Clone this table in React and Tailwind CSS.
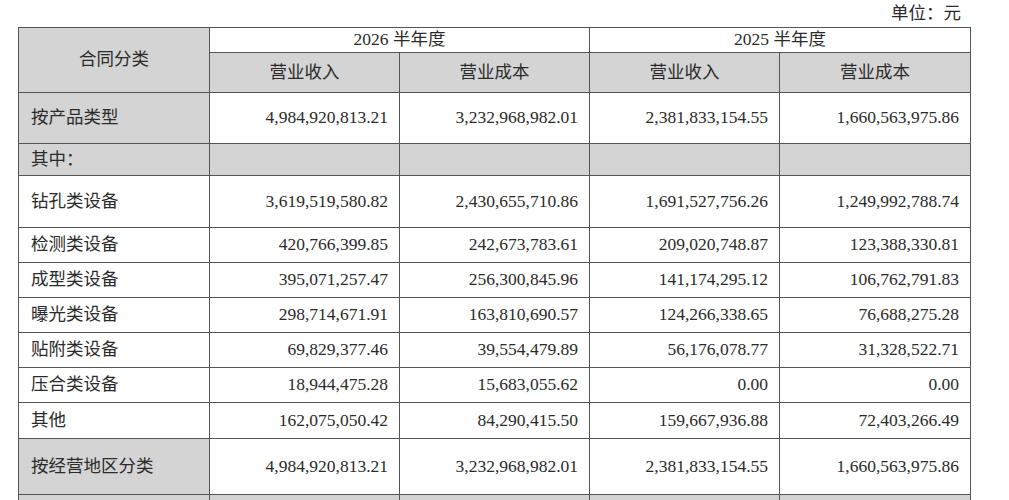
import React from "react";

const rows = [
  { label: "按产品类型", vals: ["4,984,920,813.21", "3,232,968,982.01", "2,381,833,154.55", "1,660,563,975.86"], h: "h-[51px]", grayLabel: true },
  { label: "其中：", vals: ["", "", "", ""], h: "h-[32px]", grayAll: true },
  { label: "钻孔类设备", vals: ["3,619,519,580.82", "2,430,655,710.86", "1,691,527,756.26", "1,249,992,788.74"], h: "h-[52px]" },
  { label: "检测类设备", vals: ["420,766,399.85", "242,673,783.61", "209,020,748.87", "123,388,330.81"], h: "h-[35px]" },
  { label: "成型类设备", vals: ["395,071,257.47", "256,300,845.96", "141,174,295.12", "106,762,791.83"], h: "h-[35px]" },
  { label: "曝光类设备", vals: ["298,714,671.91", "163,810,690.57", "124,266,338.65", "76,688,275.28"], h: "h-[35px]" },
  { label: "贴附类设备", vals: ["69,829,377.46", "39,554,479.89", "56,176,078.77", "31,328,522.71"], h: "h-[35px]" },
  { label: "压合类设备", vals: ["18,944,475.28", "15,683,055.62", "0.00", "0.00"], h: "h-[35px]" },
  { label: "其他", vals: ["162,075,050.42", "84,290,415.50", "159,667,936.88", "72,403,266.49"], h: "h-[36px]" },
  { label: "按经营地区分类", vals: ["4,984,920,813.21", "3,232,968,982.01", "2,381,833,154.55", "1,660,563,975.86"], h: "h-[56px]", grayLabel: true },
  { label: "", vals: ["", "", "", ""], h: "h-[30px]", grayAll: true },
];

const cell = "border border-[#555] px-[12px]";

export default function App() {
  return (
    <div className="w-[1009px] h-[500px] overflow-hidden bg-white text-[#2b2b2b] text-[17.5px] leading-none" style={{ fontFamily: '"Liberation Serif", "Noto Sans CJK SC", serif' }}>
      <div className="h-[27px] flex items-center justify-end pr-[48px] pt-[1px]">单位：元</div>
      <table className="ml-[18px] border-collapse table-fixed w-[952px]">
        <colgroup>
          <col className="w-[191px]" />
          <col className="w-[190px]" />
          <col className="w-[190px]" />
          <col className="w-[190px]" />
          <col className="w-[191px]" />
        </colgroup>
        <thead>
          <tr className="h-[25px]">
            <th rowSpan={2} className={`${cell} bg-[#d4d4d4] font-normal text-center`}>合同分类</th>
            <th colSpan={2} className={`${cell} font-normal text-center`}>2026 半年度</th>
            <th colSpan={2} className={`${cell} font-normal text-center`}>2025 半年度</th>
          </tr>
          <tr className="h-[40px]">
            <th className={`${cell} bg-[#d4d4d4] font-normal text-center`}>营业收入</th>
            <th className={`${cell} bg-[#d4d4d4] font-normal text-center`}>营业成本</th>
            <th className={`${cell} bg-[#d4d4d4] font-normal text-center`}>营业收入</th>
            <th className={`${cell} bg-[#d4d4d4] font-normal text-center`}>营业成本</th>
          </tr>
        </thead>
        <tbody>
          {rows.map((r, i) => (
            <tr key={i} className={r.h}>
              <td className={`${cell} text-left ${r.grayLabel || r.grayAll ? "bg-[#d4d4d4]" : ""}`}>{r.label}</td>
              {r.vals.map((v, j) => (
                <td key={j} className={`${cell} text-right pr-[11px] ${r.grayAll ? "bg-[#d4d4d4]" : ""}`}>{v}</td>
              ))}
            </tr>
          ))}
        </tbody>
      </table>
    </div>
  );
}
